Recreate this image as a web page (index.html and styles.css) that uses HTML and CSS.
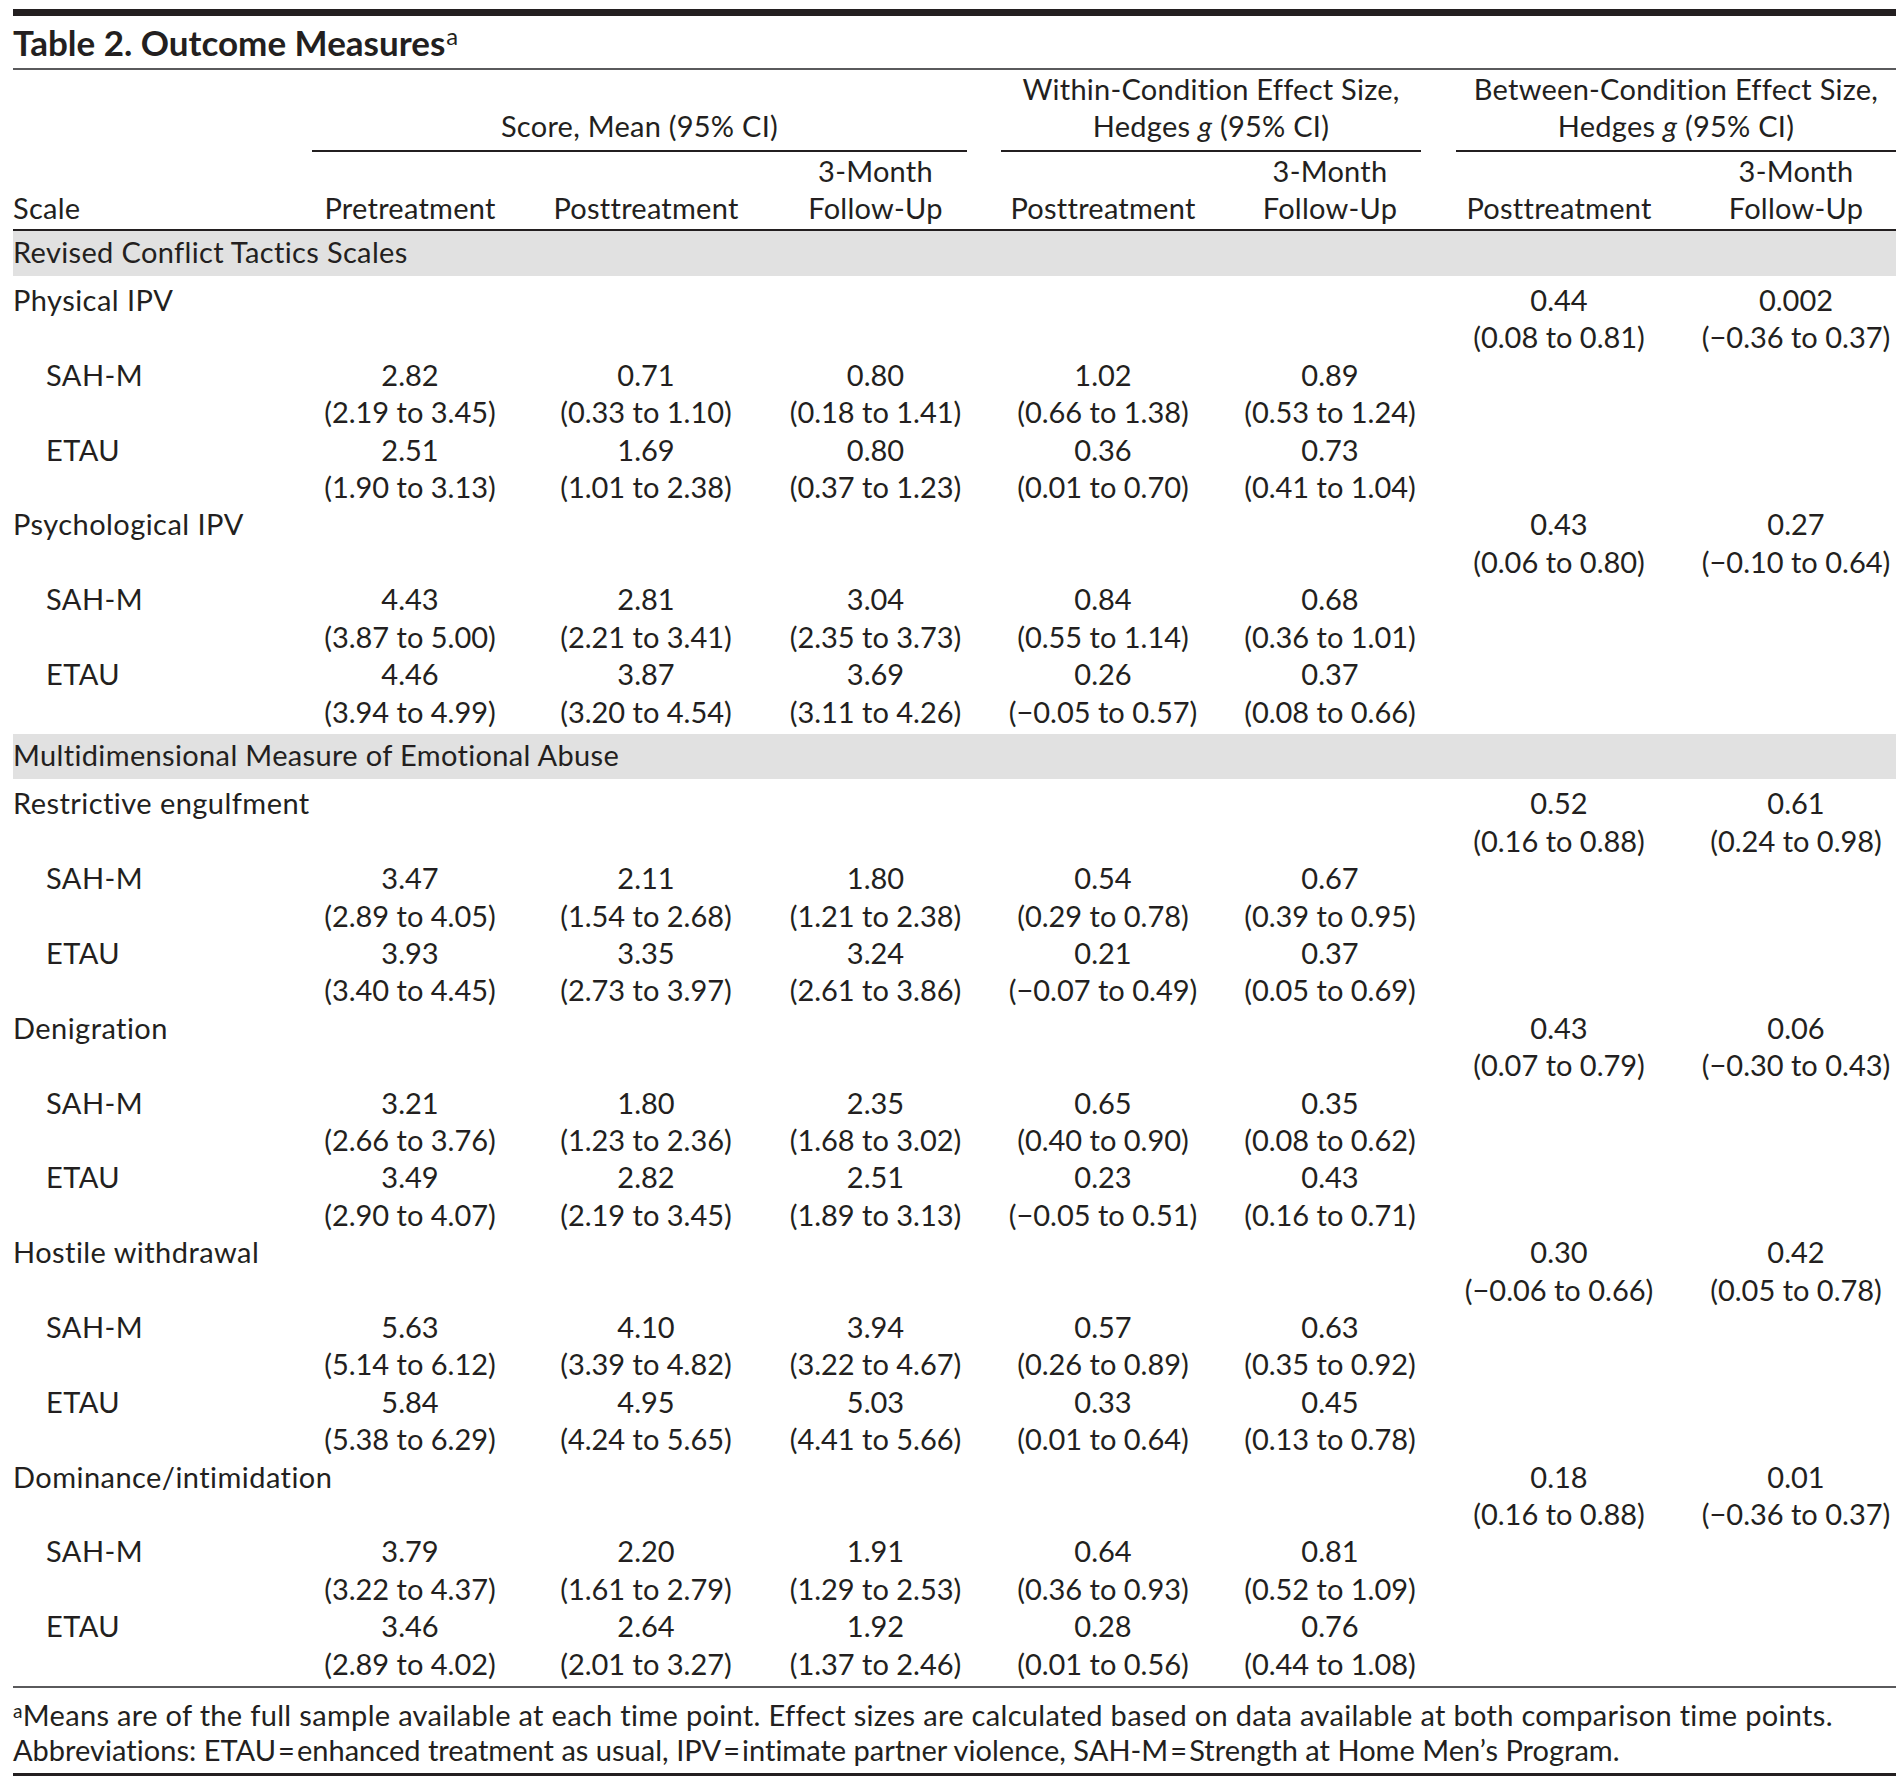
FILE: index.html
```html
<!DOCTYPE html>
<html lang="en">
<head>
<meta charset="utf-8">
<title>Table 2. Outcome Measures</title>
<link rel="stylesheet" href="styles.css">
</head>
<body>
<div class="page">
  <h1 class="title">Table 2. Outcome Measures<sup>a</sup></h1>
  <div class="tbl-wrap">
    <table class="outcomes">
      <colgroup>
        <col class="c-scale"><col class="c-pre"><col class="c-post"><col class="c-fu">
        <col class="c-wpost"><col class="c-wfu"><col class="c-bpost"><col class="c-bfu">
      </colgroup>
      <thead>
        <tr class="grp-row">
          <th class="scale" rowspan="2">Scale</th>
          <th class="grp" colspan="3"><div class="grp-lbl">Score, Mean (95% CI)</div></th>
          <th class="grp" colspan="2"><div class="grp-lbl">Within-Condition Effect Size,<br>Hedges <i>g</i> (95% CI)</div></th>
          <th class="grp grp-last" colspan="2"><div class="grp-lbl">Between-Condition Effect Size,<br>Hedges <i>g</i> (95% CI)</div></th>
        </tr>
        <tr class="sub-row">
          <th>Pretreatment</th>
          <th>Posttreatment</th>
          <th>3-Month<br>Follow-Up</th>
          <th>Posttreatment</th>
          <th>3-Month<br>Follow-Up</th>
          <th>Posttreatment</th>
          <th class="last">3-Month<br>Follow-Up</th>
        </tr>
      </thead>
      <tbody>
        <tr class="band"><td colspan="8">Revised Conflict Tactics Scales</td></tr>
        <tr class="first">
          <td class="lbl">Physical IPV</td><td></td><td></td><td></td><td></td><td></td>
          <td>0.44<br>(0.08 to 0.81)</td><td class="last">0.002<br>(&minus;0.36 to 0.37)</td>
        </tr>
        <tr>
          <td class="lbl sub">SAH-M</td>
          <td>2.82<br>(2.19 to 3.45)</td><td>0.71<br>(0.33 to 1.10)</td><td>0.80<br>(0.18 to 1.41)</td>
          <td>1.02<br>(0.66 to 1.38)</td><td>0.89<br>(0.53 to 1.24)</td><td></td><td class="last"></td>
        </tr>
        <tr>
          <td class="lbl sub">ETAU</td>
          <td>2.51<br>(1.90 to 3.13)</td><td>1.69<br>(1.01 to 2.38)</td><td>0.80<br>(0.37 to 1.23)</td>
          <td>0.36<br>(0.01 to 0.70)</td><td>0.73<br>(0.41 to 1.04)</td><td></td><td class="last"></td>
        </tr>
        <tr>
          <td class="lbl">Psychological IPV</td><td></td><td></td><td></td><td></td><td></td>
          <td>0.43<br>(0.06 to 0.80)</td><td class="last">0.27<br>(&minus;0.10 to 0.64)</td>
        </tr>
        <tr>
          <td class="lbl sub">SAH-M</td>
          <td>4.43<br>(3.87 to 5.00)</td><td>2.81<br>(2.21 to 3.41)</td><td>3.04<br>(2.35 to 3.73)</td>
          <td>0.84<br>(0.55 to 1.14)</td><td>0.68<br>(0.36 to 1.01)</td><td></td><td class="last"></td>
        </tr>
        <tr class="final">
          <td class="lbl sub">ETAU</td>
          <td>4.46<br>(3.94 to 4.99)</td><td>3.87<br>(3.20 to 4.54)</td><td>3.69<br>(3.11 to 4.26)</td>
          <td>0.26<br>(&minus;0.05 to 0.57)</td><td>0.37<br>(0.08 to 0.66)</td><td></td><td class="last"></td>
        </tr>

        <tr class="band"><td colspan="8">Multidimensional Measure of Emotional Abuse</td></tr>
        <tr class="first">
          <td class="lbl">Restrictive engulfment</td><td></td><td></td><td></td><td></td><td></td>
          <td>0.52<br>(0.16 to 0.88)</td><td class="last">0.61<br>(0.24 to 0.98)</td>
        </tr>
        <tr>
          <td class="lbl sub">SAH-M</td>
          <td>3.47<br>(2.89 to 4.05)</td><td>2.11<br>(1.54 to 2.68)</td><td>1.80<br>(1.21 to 2.38)</td>
          <td>0.54<br>(0.29 to 0.78)</td><td>0.67<br>(0.39 to 0.95)</td><td></td><td class="last"></td>
        </tr>
        <tr>
          <td class="lbl sub">ETAU</td>
          <td>3.93<br>(3.40 to 4.45)</td><td>3.35<br>(2.73 to 3.97)</td><td>3.24<br>(2.61 to 3.86)</td>
          <td>0.21<br>(&minus;0.07 to 0.49)</td><td>0.37<br>(0.05 to 0.69)</td><td></td><td class="last"></td>
        </tr>
        <tr>
          <td class="lbl">Denigration</td><td></td><td></td><td></td><td></td><td></td>
          <td>0.43<br>(0.07 to 0.79)</td><td class="last">0.06<br>(&minus;0.30 to 0.43)</td>
        </tr>
        <tr>
          <td class="lbl sub">SAH-M</td>
          <td>3.21<br>(2.66 to 3.76)</td><td>1.80<br>(1.23 to 2.36)</td><td>2.35<br>(1.68 to 3.02)</td>
          <td>0.65<br>(0.40 to 0.90)</td><td>0.35<br>(0.08 to 0.62)</td><td></td><td class="last"></td>
        </tr>
        <tr>
          <td class="lbl sub">ETAU</td>
          <td>3.49<br>(2.90 to 4.07)</td><td>2.82<br>(2.19 to 3.45)</td><td>2.51<br>(1.89 to 3.13)</td>
          <td>0.23<br>(&minus;0.05 to 0.51)</td><td>0.43<br>(0.16 to 0.71)</td><td></td><td class="last"></td>
        </tr>
        <tr>
          <td class="lbl">Hostile withdrawal</td><td></td><td></td><td></td><td></td><td></td>
          <td>0.30<br>(&minus;0.06 to 0.66)</td><td class="last">0.42<br>(0.05 to 0.78)</td>
        </tr>
        <tr>
          <td class="lbl sub">SAH-M</td>
          <td>5.63<br>(5.14 to 6.12)</td><td>4.10<br>(3.39 to 4.82)</td><td>3.94<br>(3.22 to 4.67)</td>
          <td>0.57<br>(0.26 to 0.89)</td><td>0.63<br>(0.35 to 0.92)</td><td></td><td class="last"></td>
        </tr>
        <tr>
          <td class="lbl sub">ETAU</td>
          <td>5.84<br>(5.38 to 6.29)</td><td>4.95<br>(4.24 to 5.65)</td><td>5.03<br>(4.41 to 5.66)</td>
          <td>0.33<br>(0.01 to 0.64)</td><td>0.45<br>(0.13 to 0.78)</td><td></td><td class="last"></td>
        </tr>
        <tr>
          <td class="lbl">Dominance/intimidation</td><td></td><td></td><td></td><td></td><td></td>
          <td>0.18<br>(0.16 to 0.88)</td><td class="last">0.01<br>(&minus;0.36 to 0.37)</td>
        </tr>
        <tr>
          <td class="lbl sub">SAH-M</td>
          <td>3.79<br>(3.22 to 4.37)</td><td>2.20<br>(1.61 to 2.79)</td><td>1.91<br>(1.29 to 2.53)</td>
          <td>0.64<br>(0.36 to 0.93)</td><td>0.81<br>(0.52 to 1.09)</td><td></td><td class="last"></td>
        </tr>
        <tr class="final">
          <td class="lbl sub">ETAU</td>
          <td>3.46<br>(2.89 to 4.02)</td><td>2.64<br>(2.01 to 3.27)</td><td>1.92<br>(1.37 to 2.46)</td>
          <td>0.28<br>(0.01 to 0.56)</td><td>0.76<br>(0.44 to 1.08)</td><td></td><td class="last"></td>
        </tr>
      </tbody>
    </table>
  </div>
  <div class="notes">
    <p><sup>a</sup>Means are of the full sample available at each time point. Effect sizes are calculated based on data available at both comparison time points.</p>
    <p class="abbr">Abbreviations: ETAU<span class="eq">=</span>enhanced treatment as usual, IPV<span class="eq">=</span>intimate partner violence, SAH-M<span class="eq">=</span>Strength at Home Men’s Program.</p>
  </div>
</div>
</body>
</html>
```

FILE: styles.css
```css
html, body {
  margin: 0;
  padding: 0;
  background: #ffffff;
}

body {
  color: #231f20;
  font-family: Lato, "Open Sans", "Liberation Sans", sans-serif;
}

.page {
  width: 1883px;
  margin: 9px 0 0 13px;
}

.title {
  margin: 0;
  border-top: 7px solid #231f20;
  border-bottom: 2px solid #5a5a5c;
  height: 52px;
  line-height: 52px;
  font-size: 35px;
  font-weight: 700;
  white-space: nowrap;
}

.title sup {
  margin-left: 1px;
  font-size: 0.68em;
  line-height: 0;
  vertical-align: 0.48em;
  font-weight: 400;
}

.tbl-wrap {
  border-bottom: 2px solid #5a5a5c;
}

.outcomes {
  width: 1883px;
  table-layout: fixed;
  border-collapse: separate;
  border-spacing: 0;
  font-size: 29px;
  line-height: 37.4px;
}

.c-scale { width: 282px; }
.c-pre { width: 230px; }
.c-post { width: 242px; }
.c-fu { width: 217px; }
.c-wpost { width: 238px; }
.c-wfu { width: 216px; }
.c-bpost { width: 242px; }
.c-bfu { width: 216px; }

.outcomes th,
.outcomes td {
  padding: 0;
  font-weight: 400;
  text-align: center;
  vertical-align: top;
  white-space: nowrap;
}

.outcomes th {
  vertical-align: bottom;
  letter-spacing: 0.25px;
}

.outcomes th.scale {
  text-align: left;
  padding-bottom: 2px;
  border-bottom: 2px solid #231f20;
}

.grp-row th.grp {
  padding: 0 17px;
}

.grp-row th.grp-last {
  padding: 0 0 0 18px;
}

.grp-lbl {
  padding-bottom: 5px;
  border-bottom: 2px solid #231f20;
}

.sub-row th {
  padding-bottom: 2px;
  border-bottom: 2px solid #231f20;
}

.outcomes .last {
  padding-left: 16px;
}

.outcomes tr.band td {
  background: #e1e1e1;
  text-align: left;
  padding: 2px 0 6px;
  letter-spacing: 0.35px;
}

.outcomes td.lbl {
  text-align: left;
  letter-spacing: 0.45px;
}

.outcomes td.sub {
  padding-left: 33px;
}

.outcomes tr.first td {
  padding-top: 5px;
}

.outcomes tr.final td {
  padding-bottom: 4px;
}

.notes {
  padding: 9px 0 6px;
  border-bottom: 3px solid #231f20;
  font-size: 29px;
  line-height: 35px;
  letter-spacing: 0.32px;
}

.notes p {
  margin: 0;
  white-space: nowrap;
}

.notes p.abbr {
  letter-spacing: 0.02px;
}

.notes .eq {
  margin: 0 2px;
}

.notes sup {
  font-size: 0.66em;
  line-height: 0;
  vertical-align: 0.4em;
}
```
